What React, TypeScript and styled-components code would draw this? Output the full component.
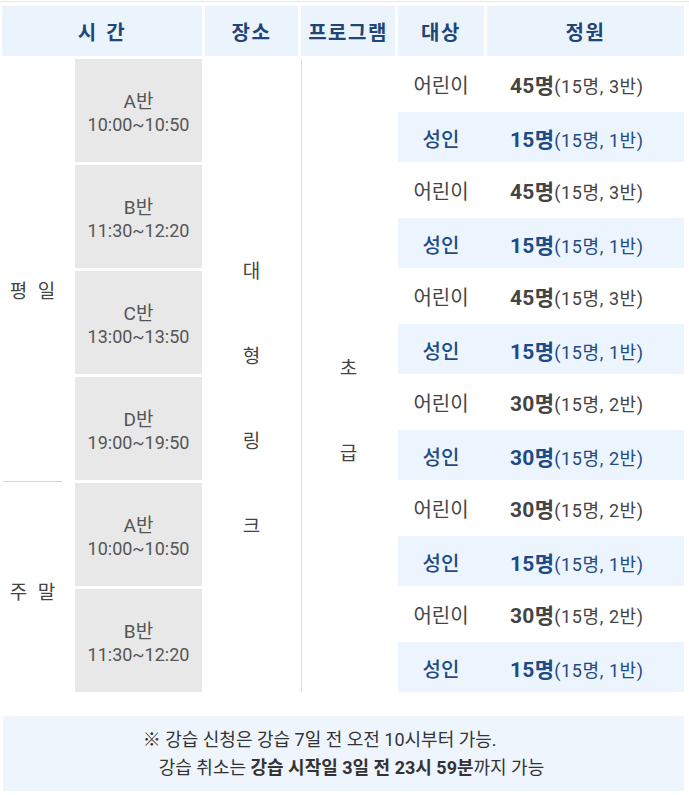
import React from "react";
import styled, { createGlobalStyle } from "styled-components";

const GlobalStyle = createGlobalStyle`
  body {
    margin: 0;
    background: #fff;
    font-family: Roboto, "Noto Sans CJK KR", sans-serif;
  }
`;

const Page = styled.div`
  width: 689px;
  margin-top: 1px;
  border-top: 1px solid #e6e6e6;
  padding: 4px 5px 0 2px;
  box-sizing: border-box;
`;

const Grid = styled.div`
  display: grid;
  grid-template-columns: 70px 127px 93px 94px 86px 197px;
  grid-auto-rows: 50px;
  gap: 3px;
`;

const HeadCell = styled.div<{ $span?: number }>`
  grid-row: 1;
  grid-column: span ${(p) => p.$span || 1};
  background: #ebf3fc;
  color: #1f4677;
  font-size: 20px;
  font-weight: 700;
  letter-spacing: 1.5px;
  display: flex;
  align-items: center;
  justify-content: center;
  word-spacing: 2px;
`;

const DayCell = styled.div<{ $row: number; $span: number; $shift: number; $line?: boolean }>`
  grid-column: 1;
  grid-row: ${(p) => p.$row} / span ${(p) => p.$span};
  margin-right: 10px;
  margin-left: 1px;
  display: flex;
  align-items: center;
  justify-content: center;
  padding-top: ${(p) => p.$shift}px;
  color: #444;
  font-size: 19px;
  word-spacing: 6px;
  border-bottom: ${(p) => (p.$line ? "1px solid #d4d4d4" : "none")};
  margin-bottom: ${(p) => (p.$line ? "-2px" : "0")};
`;

const SlotCell = styled.div<{ $row: number }>`
  grid-column: 2;
  grid-row: ${(p) => p.$row} / span 2;
  background: #e8e8e8;
  color: #555;
  display: flex;
  flex-direction: column;
  align-items: center;
  justify-content: center;
  padding-top: 4px;
`;

const SlotName = styled.div`
  font-size: 19px;
  line-height: 23px;
`;

const SlotTime = styled.div`
  font-size: 18px;
  line-height: 23px;
`;

const VerticalText = styled.div<{ $col: number; $shift: number; $rule?: boolean }>`
  grid-column: ${(p) => p.$col};
  grid-row: 2 / span 12;
  display: flex;
  flex-direction: column;
  align-items: center;
  justify-content: center;
  padding-top: ${(p) => p.$shift}px;
  color: #444;
  font-size: 19px;
  border-left: ${(p) => (p.$rule ? "1px solid #dedede" : "none")};
  & > span {
    line-height: 85px;
  }
`;

const TargetRow = styled.div<{ $row: number; $adult?: boolean }>`
  grid-column: 5 / span 2;
  grid-row: ${(p) => p.$row};
  display: grid;
  grid-template-columns: 86px 1fr;
  column-gap: 3px;
  align-items: center;
  background: ${(p) => (p.$adult ? "#ecf4fd" : "transparent")};
  color: ${(p) => (p.$adult ? "#1e4b86" : "#444")};
`;

const Target = styled.div<{ $adult?: boolean }>`
  text-align: center;
  font-size: 20px;
  font-weight: ${(p) => (p.$adult ? 500 : 400)};
  padding-top: ${(p) => (p.$adult ? "2px" : "0")};
`;

const Capacity = styled.div<{ $adult?: boolean }>`
  padding-left: 23px;
  font-size: 18px;
  letter-spacing: 0.6px;
  white-space: nowrap;
  padding-top: ${(p) => (p.$adult ? "2px" : "0")};
  & > b {
    font-size: 21px;
    font-weight: 700;
    letter-spacing: 0.3px;
  }
`;

const Notice = styled.div`
  margin: 24px 0 0 1px;
  height: 75px;
  background: #eef5fd;
  display: flex;
  align-items: center;
  justify-content: center;
`;

const NoticeText = styled.p`
  margin: 0;
  padding-left: 16px;
  text-indent: -16px;
  color: #333;
  font-size: 18px;
  line-height: 28px;
  & > b {
    font-weight: 700;
  }
`;

type Slot = {
  name: string;
  time: string;
  child: [string, string];
  adult: [string, string];
};

const slots: Slot[] = [
  { name: "A반", time: "10:00~10:50", child: ["45명", "(15명, 3반)"], adult: ["15명", "(15명, 1반)"] },
  { name: "B반", time: "11:30~12:20", child: ["45명", "(15명, 3반)"], adult: ["15명", "(15명, 1반)"] },
  { name: "C반", time: "13:00~13:50", child: ["45명", "(15명, 3반)"], adult: ["15명", "(15명, 1반)"] },
  { name: "D반", time: "19:00~19:50", child: ["30명", "(15명, 2반)"], adult: ["30명", "(15명, 2반)"] },
  { name: "A반", time: "10:00~10:50", child: ["30명", "(15명, 2반)"], adult: ["15명", "(15명, 1반)"] },
  { name: "B반", time: "11:30~12:20", child: ["30명", "(15명, 2반)"], adult: ["15명", "(15명, 1반)"] },
];

export default function App() {
  return (
    <Page>
      <GlobalStyle />
      <Grid>
        <HeadCell $span={2}>시 간</HeadCell>
        <HeadCell>장소</HeadCell>
        <HeadCell>프로그램</HeadCell>
        <HeadCell>대상</HeadCell>
        <HeadCell>정원</HeadCell>

        <DayCell $row={2} $span={8} $shift={38} $line>
          평 일
        </DayCell>
        <DayCell $row={10} $span={4} $shift={6}>
          주 말
        </DayCell>

        {slots.map((s, i) => (
          <SlotCell key={"s" + i} $row={2 + i * 2}>
            <SlotName>{s.name}</SlotName>
            <SlotTime>{s.time}</SlotTime>
          </SlotCell>
        ))}

        <VerticalText $col={3} $shift={46}>
          {["대", "형", "링", "크"].map((c) => (
            <span key={c}>{c}</span>
          ))}
        </VerticalText>
        <VerticalText $col={4} $shift={70} $rule>
          <span>초</span>
          <span>급</span>
        </VerticalText>

        {slots.map((s, i) => (
          <React.Fragment key={"t" + i}>
            <TargetRow $row={2 + i * 2}>
              <Target>어린이</Target>
              <Capacity>
                <b>{s.child[0]}</b>
                {s.child[1]}
              </Capacity>
            </TargetRow>
            <TargetRow $row={3 + i * 2} $adult>
              <Target $adult>성인</Target>
              <Capacity $adult>
                <b>{s.adult[0]}</b>
                {s.adult[1]}
              </Capacity>
            </TargetRow>
          </React.Fragment>
        ))}
      </Grid>
      <Notice>
        <NoticeText>
          ※ 강습 신청은 강습 7일 전 오전 10시부터 가능.
          <br />
          강습 취소는 <b>강습 시작일 3일 전 23시 59분</b>까지 가능
        </NoticeText>
      </Notice>
    </Page>
  );
}
